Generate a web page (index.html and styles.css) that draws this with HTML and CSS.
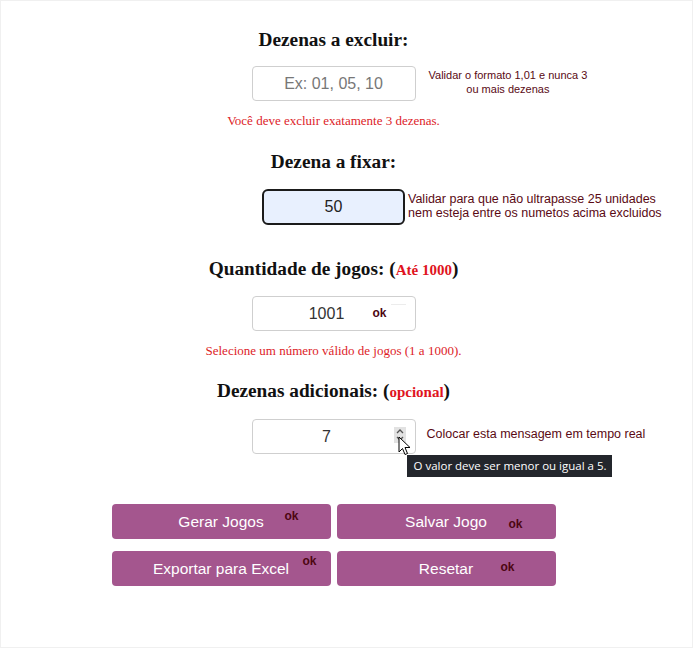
FILE: index.html
```html
<!DOCTYPE html>
<html lang="pt">
<head>
<meta charset="utf-8">
<title>Gerador de Jogos</title>
<link rel="stylesheet" href="styles.css">
</head>
<body>
<div class="page">
  <div class="col">
    <h3 class="h h-first">Dezenas a excluir:</h3>
    <div class="row">
      <input class="field" type="text" placeholder="Ex: 01, 05, 10">
      <p class="note note-center">Validar o formato 1,01 e nunca 3<br>ou mais dezenas</p>
    </div>
    <p class="err">Você deve excluir exatamente 3 dezenas.</p>

    <h3 class="h h-mid">Dezena a fixar:</h3>
    <div class="row row-narrow">
      <input class="field field-focus" type="text" value="50">
      <p class="note note-left">Validar para que não ultrapasse 25 unidades<br>nem esteja entre os numetos acima excluidos</p>
    </div>

    <h3 class="h h-big">Quantidade de jogos: (<span class="hint">Até 1000</span>)</h3>
    <div class="row row-qty">
      <div class="wrap">
        <input class="field field-num" type="text" value="1001">
        <span class="ok ok-input">ok</span>
        <span class="ghost"></span>
      </div>
    </div>
    <p class="err">Selecione um número válido de jogos (1 a 1000).</p>

    <h3 class="h h-last">Dezenas adicionais: (<span class="hint">opcional</span>)</h3>
    <div class="row">
      <div class="wrap">
        <input class="field field-num" type="text" value="7">
        <span class="spin">
          <svg width="12" height="16" viewBox="0 0 12 16"><path d="M3 6 L6 3 L9 6" fill="none" stroke="#555" stroke-width="1.3"/><path d="M3 10 L6 13 L9 10" fill="none" stroke="#555" stroke-width="1.3"/></svg>
        </span>
        <svg class="cursor" width="14" height="21" viewBox="0 0 14 21"><path d="M1 1 L1 16 L4.5 12.5 L7 18.5 L9.5 17.5 L7 11.5 L12 11.5 Z" fill="#fff" stroke="#000" stroke-width="1" stroke-linejoin="round"/></svg>
        <div class="tip">O valor deve ser menor ou igual a 5.</div>
      </div>
      <p class="note note-rt">Colocar esta mensagem em tempo real</p>
    </div>

    <div class="buttons">
      <button class="btn">Gerar Jogos<span class="ok ok-b1">ok</span></button>
      <button class="btn">Salvar Jogo<span class="ok ok-b2">ok</span></button>
      <button class="btn">Exportar para Excel<span class="ok ok-b3">ok</span></button>
      <button class="btn">Resetar<span class="ok ok-b4">ok</span></button>
    </div>
  </div>
</div>
</body>
</html>
```
FILE: styles.css
```css
html, body {
  margin: 0;
  padding: 0;
  background: #fff;
}

.page {
  box-sizing: border-box;
  width: 693px;
  height: 648px;
  border: 1px solid #f0f0f0;
  padding-top: 28px;
}

.col {
  width: 665px;
  display: flex;
  flex-direction: column;
  align-items: center;
}

.h {
  margin: 0;
  font-family: "Liberation Serif", "Times New Roman", serif;
  font-weight: bold;
  font-size: 19.3px;
  line-height: 22px;
  color: #111;
  text-align: center;
}

.h-mid { margin-top: 22px; }
.h-big { margin-top: 33px; }
.h-last { margin-top: 21px; }

.hint {
  color: #e0141e;
  font-size: 15px;
}

.row {
  width: 100%;
  display: grid;
  grid-template-columns: 1fr 164px 1fr;
  align-items: center;
  margin-top: 15px;
}

.h + .row { margin-top: 16px; }
.h-first + .row { margin-top: 15px; }
.h + .row-qty { margin-top: 15px; }

.row-narrow {
  grid-template-columns: 1fr 143px 1fr;
}

.row > .field,
.row > .wrap {
  grid-column: 2;
}

.wrap {
  position: relative;
  height: 35px;
}

.field {
  box-sizing: border-box;
  width: 100%;
  height: 35px;
  margin: 0;
  border: 1px solid #cfcfcf;
  border-radius: 4px;
  background: #fff;
  font-family: "Liberation Sans", Arial, sans-serif;
  font-size: 16px;
  color: #222;
  text-align: center;
  padding: 0 6px;
  outline: none;
}

.field::placeholder {
  color: #777;
}

.field-focus {
  height: 36px;
  border: 2px solid #1b1b1b;
  border-radius: 6px;
  background: #e8f0fe;
}

.field-num {
  padding-right: 20px;
  color: #333;
}

.note {
  grid-column: 3;
  margin: 0;
  font-family: "Liberation Sans", Arial, sans-serif;
  font-size: 12.5px;
  line-height: 14px;
  color: #5a0a14;
  white-space: nowrap;
}

.note-center {
  justify-self: start;
  margin-left: 13px;
  text-align: center;
  font-size: 11px;
  margin-bottom: 4px;
}

.note-left {
  margin-left: 3px;
  text-align: left;
  margin-bottom: 3px;
}

.note-rt {
  margin-left: 11px;
  margin-bottom: 6px;
}

.err {
  margin: 12px 0 0;
  font-family: "Liberation Serif", "Times New Roman", serif;
  font-size: 13px;
  line-height: 16px;
  color: #dd1c28;
  text-align: center;
}

.ok {
  position: absolute;
  font-family: "Liberation Sans", Arial, sans-serif;
  font-weight: bold;
  font-size: 12px;
  line-height: 14px;
  color: #4d0612;
}

.ok-input {
  left: 121px;
  top: 10px;
}

.ghost {
  position: absolute;
  left: 139px;
  top: 8px;
  width: 15px;
  height: 1px;
  background: #ececec;
}

.spin {
  position: absolute;
  left: 142px;
  top: 8px;
  width: 12px;
  height: 16px;
  background: #e2e2e2;
  display: flex;
}

.cursor {
  position: absolute;
  left: 146px;
  top: 17px;
}

.tip {
  position: absolute;
  left: 155px;
  top: 36px;
  width: 205px;
  height: 22px;
  box-sizing: border-box;
  background: #23262c;
  color: #fff;
  font-family: "Open Sans", "Noto Sans", sans-serif;
  font-size: 11.5px;
  line-height: 22px;
  padding-left: 7px;
  white-space: nowrap;
}

.buttons {
  margin-top: 50px;
  display: grid;
  grid-template-columns: 219px 219px;
  column-gap: 6px;
  row-gap: 12px;
}

.btn {
  position: relative;
  height: 35px;
  margin: 0;
  border: none;
  border-radius: 4px;
  background: #a4568e;
  color: #fff;
  font-family: "Liberation Sans", Arial, sans-serif;
  font-size: 15.5px;
  text-align: center;
  padding: 0;
}

.ok-b1 { left: 173px; top: 5px; }
.ok-b2 { left: 172px; top: 13px; }
.ok-b3 { left: 191px; top: 3px; }
.ok-b4 { left: 164px; top: 9px; }
```
